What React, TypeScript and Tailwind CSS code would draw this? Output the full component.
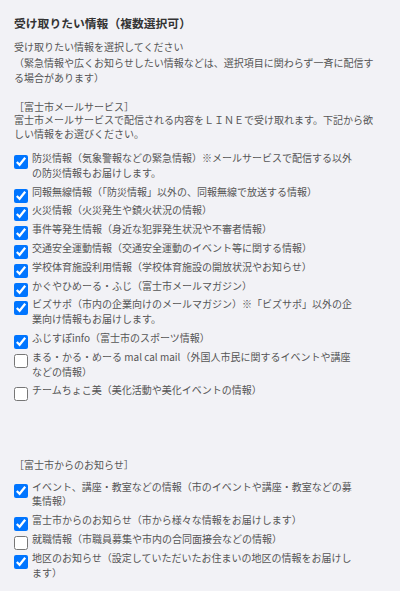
import React from "react";

type Item = { label: string; checked: boolean };

const mailItems: Item[] = [
  { label: "防災情報（気象警報などの緊急情報）※メールサービスで配信する以外の防災情報もお届けします。", checked: true },
  { label: "同報無線情報（「防災情報」以外の、同報無線で放送する情報）", checked: true },
  { label: "火災情報（火災発生や鎮火状況の情報）", checked: true },
  { label: "事件等発生情報（身近な犯罪発生状況や不審者情報）", checked: true },
  { label: "交通安全運動情報（交通安全運動のイベント等に関する情報）", checked: true },
  { label: "学校体育施設利用情報（学校体育施設の開放状況やお知らせ）", checked: true },
  { label: "かぐやひめーる・ふじ（富士市メールマガジン）", checked: true },
  { label: "ビズサポ（市内の企業向けのメールマガジン）※「ビズサポ」以外の企業向け情報もお届けします。", checked: true },
  { label: "ふじすぽinfo（富士市のスポーツ情報）", checked: true },
  { label: "まる・かる・めーる mal cal mail（外国人市民に関するイベントや講座などの情報）", checked: false },
  { label: "チームちょこ美（美化活動や美化イベントの情報）", checked: false },
];

const cityItems: Item[] = [
  { label: "イベント、講座・教室などの情報（市のイベントや講座・教室などの募集情報）", checked: true },
  { label: "富士市からのお知らせ（市から様々な情報をお届けします）", checked: true },
  { label: "就職情報（市職員募集や市内の合同面接会などの情報）", checked: false },
  { label: "地区のお知らせ（設定していただいたお住まいの地区の情報をお届けします）", checked: true },
];

function CheckList({ items }: { items: Item[] }) {
  return (
    <ul className="flex flex-col">
      {items.map((it) => (
        <li key={it.label}>
          <label className="flex items-start gap-[4px]">
            <input
              type="checkbox"
              defaultChecked={it.checked}
              className="mt-[4px] mb-0 mx-0 h-[14px] w-[14px] shrink-0"
            />
            <span className="w-[322px] pb-[4px] text-[10px] leading-[14.8px]">{it.label}</span>
          </label>
        </li>
      ))}
    </ul>
  );
}

export default function App() {
  return (
    <div className="min-h-screen bg-[#f2f2f6] pl-[14px] pt-[14px] pb-[8px] font-['Noto_Sans_CJK_JP',sans-serif] text-[#555]">
      <h2 className="text-[11.8px] font-bold leading-[17px] text-[#333]">受け取りたい情報（複数選択可）</h2>
      <p className="mt-[8px] w-[366px] text-[10px] leading-[15.5px]">
        受け取りたい情報を選択してください
        <br />
        （緊急情報や広くお知らせしたい情報などは、選択項目に関わらず一斉に配信する場合があります）
      </p>

      <section className="mt-[14px]">
        <p className="w-[366px] text-[10px] leading-[13.5px]">
          ［富士市メールサービス］
          <br />
          富士市メールサービスで配信される内容をＬＩＮＥで受け取れます。下記から欲しい情報をお選びください。
        </p>
        <div className="mt-[11px]">
          <CheckList items={mailItems} />
        </div>
      </section>

      <section className="mt-[56px]">
        <p className="w-[366px] text-[10px] leading-[13.5px]">［富士市からのお知らせ］</p>
        <div className="mt-[8px]">
          <CheckList items={cityItems} />
        </div>
      </section>
    </div>
  );
}
